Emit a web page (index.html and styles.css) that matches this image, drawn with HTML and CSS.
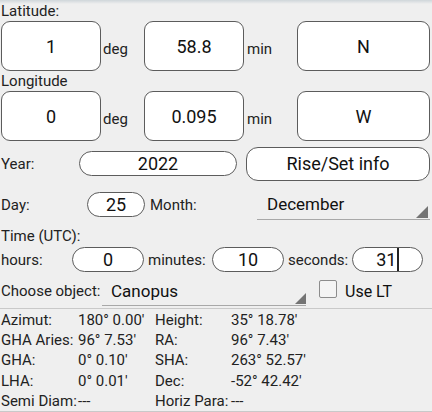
FILE: index.html
```html
<!DOCTYPE html>
<html lang="en">
<head>
    <meta charset="UTF-8">
    <meta name="viewport" content="width=device-width, initial-scale=1.0">
    <title>Star position</title>
    <link rel="stylesheet" href="styles.css">
</head>
<body>
    <div class="page">
        <div class="label">Latitude:</div>
        <div class="coord-row">
            <div class="field big">1</div>
            <span class="unit unit-deg">deg</span>
            <div class="field big">58.8</div>
            <span class="unit unit-min">min</span>
            <div class="field big wide">N</div>
        </div>

        <div class="label">Longitude</div>
        <div class="coord-row">
            <div class="field big">0</div>
            <span class="unit unit-deg">deg</span>
            <div class="field big">0.095</div>
            <span class="unit unit-min">min</span>
            <div class="field big wide">W</div>
        </div>

        <div class="date-row year-row">
            <span class="row-label year-label">Year:</span>
            <div class="field pill year-field">2022</div>
            <div class="field rise-btn">Rise/Set info</div>
        </div>

        <div class="date-row day-row">
            <span class="row-label day-label">Day:</span>
            <div class="field pill day-field">25</div>
            <span class="month-label">Month:</span>
            <div class="spinner month-spinner">
                <span>December</span>
                <svg class="spin-arrow" width="12" height="12" viewBox="0 0 12 12"><polygon points="12,0 12,12 0,12" fill="#747474"/></svg>
            </div>
        </div>

        <div class="label time-label">Time (UTC):</div>
        <div class="time-row">
            <span class="row-label hours-label">hours:</span>
            <div class="field pill time-field">0</div>
            <span class="time-unit">minutes:</span>
            <div class="field pill time-field">10</div>
            <span class="time-unit">seconds:</span>
            <div class="field pill time-field last">31<span class="cursor"></span></div>
        </div>

        <div class="object-row">
            <span class="row-label object-label">Choose object:</span>
            <div class="spinner object-spinner">
                <span>Canopus</span>
                <svg class="spin-arrow" width="11" height="11" viewBox="0 0 11 11"><polygon points="11,0 11,11 0,11" fill="#747474"/></svg>
            </div>
            <span class="checkbox"></span>
            <span class="check-label">Use LT</span>
        </div>
    </div>

    <div class="readout">
        <span>Azimut:</span><span>180° 0.00'</span><span>Height:</span><span>35° 18.78'</span>
        <span>GHA Aries:</span><span>96° 7.53'</span><span>RA:</span><span>96° 7.43'</span>
        <span>GHA:</span><span>0° 0.10'</span><span>SHA:</span><span>263° 52.57'</span>
        <span>LHA:</span><span>0° 0.01'</span><span>Dec:</span><span>-52° 42.42'</span>
        <span>Semi Diam:</span><span>---</span><span>Horiz Para:</span><span>---</span>
    </div>
</body>
</html>
```

FILE: styles.css
```css
body {
    margin: 0;
    background: #efefef linear-gradient(#cfd6da, #efefef) no-repeat;
    background-size: 100% 4px;
    font-family: Roboto, "Noto Sans", sans-serif;
    font-size: 15px;
    color: #222;
    overflow: hidden;
}
.page {
    padding: 1px 0 0 1px;
}
.label {
    height: 20px;
    line-height: 20px;
    white-space: nowrap;
}
.coord-row {
    display: flex;
    align-items: center;
    height: 50px;
}
.field {
    box-sizing: border-box;
    display: flex;
    align-items: center;
    justify-content: center;
    background: #fff;
    border: 1.5px solid #5c5c5c;
    color: #111;
    font-size: 18px;
    flex-shrink: 0;
}
.field.big {
    width: 100px;
    height: 50px;
    border-radius: 9px;
}
.field.wide {
    width: 133px;
}
.field.pill {
    height: 25px;
    border-radius: 13px;
}
.unit {
    box-sizing: border-box;
    padding-top: 5px;
    flex-shrink: 0;
}
.unit-deg {
    width: 43px;
    padding-left: 2px;
}
.unit-min {
    width: 53px;
    padding-left: 3px;
}
.row-label {
    flex-shrink: 0;
    white-space: nowrap;
}
.date-row {
    display: flex;
    align-items: center;
    height: 39px;
}
.year-row {
    margin-top: 3px;
}
.day-row {
    margin-top: 2px;
}
.year-label {
    width: 78px;
}
.year-field {
    width: 158px;
    height: 26px;
    margin-right: 9px;
}
.rise-btn {
    width: 184px;
    height: 34px;
    border-radius: 12px;
}
.day-label {
    width: 86px;
}
.day-field {
    width: 58px;
}
.month-label {
    width: 107px;
    padding-left: 5px;
}
.spinner {
    box-sizing: border-box;
    display: flex;
    align-items: center;
    height: 30px;
    border-bottom: 1px solid #a8a8a8;
    font-size: 17px;
    color: #111;
    flex-shrink: 0;
}
.spin-arrow {
    margin-left: auto;
    align-self: flex-end;
    margin-bottom: 1px;
}
.month-spinner {
    width: 173px;
    padding: 0 2px 0 10px;
}
.time-label {
    margin-top: 2px;
}
.time-row {
    display: flex;
    align-items: center;
    height: 25px;
    margin-top: 1px;
}
.hours-label {
    width: 71px;
}
.time-field {
    width: 72px;
}
.time-field.last {
    width: 71px;
}
.cursor {
    width: 1.5px;
    height: 23px;
    background: #222;
    margin-left: 1px;
}
.time-unit {
    width: 68px;
    padding-left: 4px;
    box-sizing: border-box;
    flex-shrink: 0;
}
.object-row {
    display: flex;
    align-items: center;
    height: 30px;
    margin-top: 4px;
}
.object-label {
    width: 101px;
}
.object-spinner {
    width: 204px;
    padding: 0 0 0 9px;
}
.checkbox {
    box-sizing: border-box;
    width: 18px;
    height: 18px;
    margin: 0 8px 5px 13px;
    border: 1.5px solid #8c8c8c;
    border-radius: 2px;
    background: #f4f4f4;
    flex-shrink: 0;
}
.check-label {
    font-size: 16px;
    color: #111;
}
.readout {
    display: grid;
    grid-template-columns: 77px 77px 76px 1fr;
    grid-auto-rows: 20.2px;
    align-items: center;
    margin-top: 2px;
    padding: 1px 0 0 1px;
    border-top: 1px solid #c9c9c9;
    border-bottom: 1px solid #c9c9c9;
    white-space: nowrap;
}
```
